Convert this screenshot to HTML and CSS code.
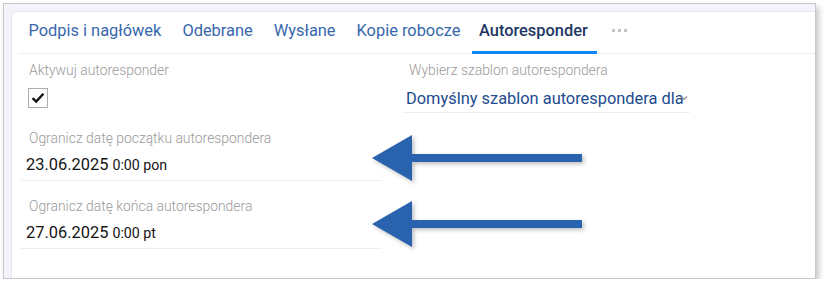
FILE: index.html
```html
<!DOCTYPE html>
<html lang="pl">
<head>
    <meta charset="UTF-8">
    <meta name="viewport" content="width=device-width, initial-scale=1.0">
    <title>Autoresponder</title>
    <link rel="stylesheet" href="styles.css">
</head>
<body>

    <div class="frame">
        <div class="card">

            <!-- Tabs -->
            <nav class="tabs">
                <a class="tab">Podpis i nagłówek</a>
                <a class="tab">Odebrane</a>
                <a class="tab">Wysłane</a>
                <a class="tab">Kopie robocze</a>
                <a class="tab active">Autoresponder</a>
                <span class="tab more"><i></i><i></i><i></i></span>
            </nav>

            <!-- Settings -->
            <div class="form">
                <div class="field plain">
                    <div class="label">Aktywuj autoresponder</div>
                    <span class="checkbox">
                        <svg width="18" height="18" viewBox="0 0 18 18">
                            <path d="M3.6 9.2 L7.2 12.6 L14.4 4.8" fill="none" stroke="#111" stroke-width="2.4"/>
                        </svg>
                    </span>
                </div>

                <div class="field select">
                    <div class="label">Wybierz szablon autorespondera</div>
                    <div class="value">Domyślny szablon autorespondera dla</div>
                    <svg class="chevron" width="8" height="6" viewBox="0 0 8 6">
                        <path d="M1 1.5 L4 4.5 L7 1.5" fill="none" stroke="#8a8a8a" stroke-width="1.2"/>
                    </svg>
                </div>

                <div class="field date">
                    <div class="label">Ogranicz datę początku autorespondera</div>
                    <div class="value">23.06.2025 <small>0:00 pon</small></div>
                </div>
                <div></div>

                <div class="field date">
                    <div class="label">Ogranicz datę końca autorespondera</div>
                    <div class="value">27.06.2025 <small>0:00 pt</small></div>
                </div>
                <div></div>
            </div>

            <!-- Annotation arrows -->
            <svg class="arrows" width="220" height="130" viewBox="0 0 220 130">
                <path d="M3 29 L43 6 L43 25 L213 25 L213 33 L43 33 L43 52 Z" />
                <path d="M3 95 L43 72 L43 91 L213 91 L213 99 L43 99 L43 118 Z" />
            </svg>
        </div>
    </div>

</body>
</html>
```

FILE: styles.css
```css
body {
    margin: 0;
    background: #ffffff;
    font-family: Roboto, "Liberation Sans", sans-serif;
}

.frame {
    width: 811px;
    height: 274px;
    margin: 3px 0 0 3px;
    border: 1px solid #c6c6c6;
    background-color: #f3f4f9;
    box-shadow: 3px 4px 6px rgba(0, 0, 0, 0.22);
    display: flex;
    flex-direction: column;
}

.card {
    position: relative;
    flex: 1;
    margin: 7px 0 0 7px;
    background: #ffffff;
    border-top: 1px solid #e4e6ee;
    border-left: 1px solid #e4e6ee;
    border-top-left-radius: 6px;
}

.tabs {
    display: flex;
    height: 41px;
    margin-left: 6px;
    border-bottom: 1px solid #eceef5;
}

.tab {
    padding: 0 10.5px 4px;
    line-height: 37px;
    font-size: 16.4px;
    color: #3767ad;
    cursor: pointer;
    white-space: nowrap;
}

.tab.active {
    color: #1d3763;
    font-weight: 500;
    padding: 0 9px 1px 7px;
    margin: 0 6px -1px 1px;
    border-bottom: 3px solid #0b87f8;
}

.tab.more {
    display: flex;
    align-items: center;
    gap: 3px;
    padding: 0 0 4px 9px;
    margin-top: -1px;
}

.tab.more i {
    width: 3px;
    height: 3px;
    background-color: #c4c5cc;
}

.form {
    display: grid;
    grid-template-columns: 361px 288px;
    column-gap: 20px;
    row-gap: 15px;
    margin-left: 9px;
    padding-top: 6px;
}

.field {
    position: relative;
}

.label {
    font-size: 13.9px;
    font-weight: 300;
    line-height: 20px;
    color: #9a9a9a;
    padding-left: 8px;
    white-space: nowrap;
}

.checkbox {
    display: flex;
    align-items: center;
    justify-content: center;
    width: 18px;
    height: 18px;
    margin: 8px 0 0 7px;
    border: 1px solid #adadad;
}

.value {
    font-size: 16.4px;
    line-height: 24px;
    white-space: nowrap;
    overflow: hidden;
}

.select .label {
    padding-left: 7px;
}

.select .value {
    margin-top: 7px;
    padding: 0 0 1px 4px;
    color: #1c4b8e;
    border-bottom: 1px solid #eceef5;
}

.select .chevron {
    position: absolute;
    left: 278px;
    top: 35px;
}

.date .value {
    margin-top: 5px;
    padding: 0 0 3px 5px;
    color: #141414;
    border-bottom: 1px solid #eceef5;
}

.date .value small {
    font-size: 14.2px;
}

.arrows {
    position: absolute;
    left: 357px;
    top: 117px;
    fill: #2a63ad;
    filter: drop-shadow(2px 2px 2px rgba(0, 0, 0, 0.25));
}
```
